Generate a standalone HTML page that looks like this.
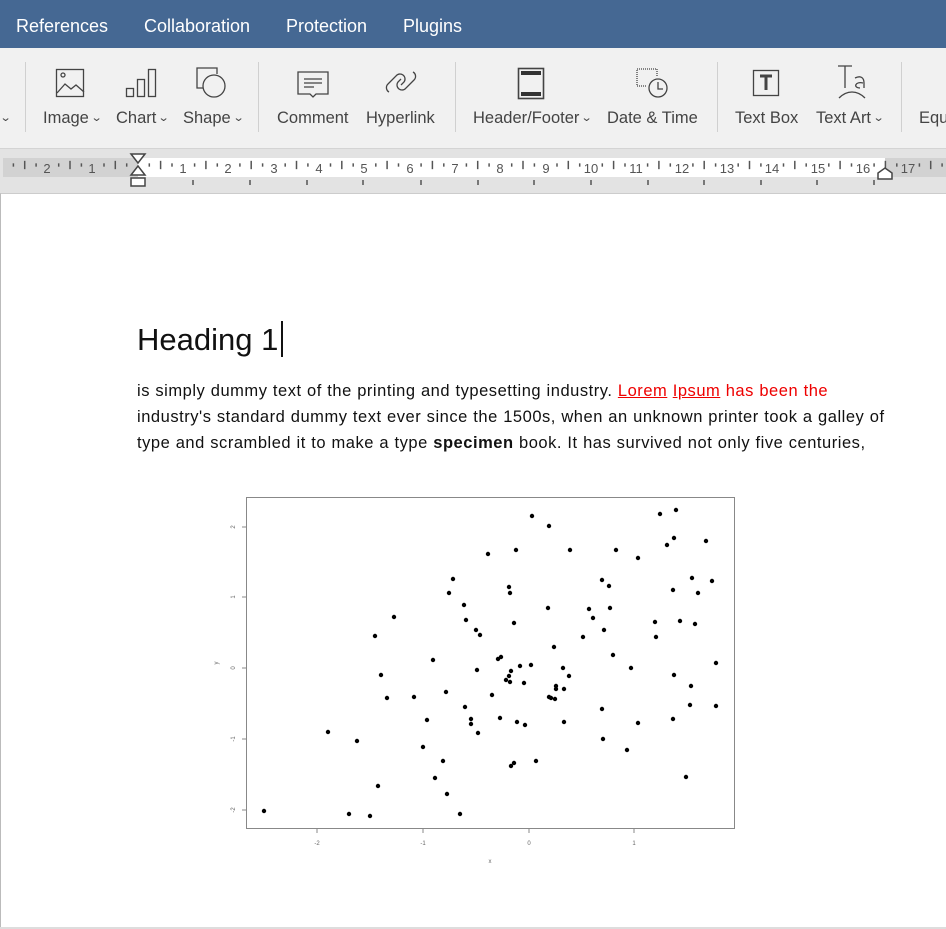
<!DOCTYPE html>
<html><head><meta charset="utf-8"><style>
*{margin:0;padding:0;box-sizing:border-box}
body{width:946px;height:929px;overflow:hidden;background:#fff;font-family:"Liberation Sans",sans-serif;position:relative}
.abs{position:absolute}
#menu{left:0;top:0;width:946px;height:48px;background:#456893}
#menu span{position:absolute;top:16px;color:#fff;font-size:18px}
#tb{left:0;top:48px;width:946px;height:100px;background:#f1f1f1}
.lbl{position:absolute;top:109px;font-size:16.5px;color:#444;white-space:nowrap}
.sep{position:absolute;top:62px;width:1px;height:70px;background:#d0d0d0}
.car{font-size:11px;display:inline-block;transform:scaleX(1.3);margin-left:3px;vertical-align:2px}
#rul{left:0;top:148px;width:946px;height:45px;background:#e3e3e3;border-top:1px solid #d4d4d4}
.line{position:absolute;left:137px;font-size:16.5px;color:#111;white-space:nowrap;letter-spacing:0.53px;word-spacing:0.3px}
</style></head><body>
<div id="menu" class="abs">
<span style="left:16px">References</span><span style="left:144px">Collaboration</span><span style="left:286px">Protection</span><span style="left:403px">Plugins</span>
</div>
<div id="tb" class="abs"></div>
<div class="sep" style="left:25px"></div><div class="sep" style="left:258px"></div><div class="sep" style="left:455px"></div><div class="sep" style="left:717px"></div><div class="sep" style="left:901px"></div>
<div class="lbl" style="left:-2px"><span class="car">⌄</span></div>
<div class="lbl" style="left:43px">Image<span class="car">⌄</span></div>
<div class="lbl" style="left:116px">Chart<span class="car">⌄</span></div>
<div class="lbl" style="left:183px">Shape<span class="car">⌄</span></div>
<div class="lbl" style="left:277px">Comment</div>
<div class="lbl" style="left:366px">Hyperlink</div>
<div class="lbl" style="left:473px">Header/Footer<span class="car">⌄</span></div>
<div class="lbl" style="left:607px">Date &amp; Time</div>
<div class="lbl" style="left:735px">Text Box</div>
<div class="lbl" style="left:816px">Text Art<span class="car">⌄</span></div>
<div class="lbl" style="left:919px">Equ</div>
<svg class="abs" style="left:0;top:48px" width="946" height="60" fill="none" stroke="#444" stroke-width="1.3">
<rect x="56.5" y="21.5" width="27" height="27"/><circle cx="63" cy="27" r="2"/><path d="M57 45l8-9 6 5 5-4 8 7"/>
<rect x="126.5" y="40.5" width="7" height="8"/><rect x="137.5" y="31.5" width="7" height="17"/><rect x="148.5" y="21.5" width="7" height="27"/>
<path d="M203 40h-6V20h20v6"/><circle cx="214" cy="38" r="11"/>
<path d="M298 24h30v22h-12l-3 3-3-3h-12z M304 31h18 M304 35h18 M304 39h10"/>
<path d="M389 44a5 5 0 0 1-1-8l8-8a5 5 0 0 1 8 6l-3 3 M413 24a5 5 0 0 1 1 8l-8 8a5 5 0 0 1-8-6l3-3"/>
<rect x="518.5" y="20.5" width="25" height="30" stroke-width="1.6"/><rect x="521" y="23" width="20" height="4" fill="#333" stroke="none"/><rect x="521" y="44" width="20" height="4" fill="#333" stroke="none"/>
<path d="M646 38h-9V21h20v7" stroke-dasharray="1 1"/><circle cx="658" cy="40" r="9"/><path d="M658 34v7h5"/>
<rect x="753.5" y="22.5" width="25" height="25"/><path d="M760 28h12M766 28v14" stroke-width="3"/>
<path d="M838 18h14M845 18v22M855 30c6-3 9 0 9 5v5M863 35c-8-2-10 5-3 5" /><path d="M839 50c8-8 18-8 26 0"/>
</svg>
<div id="rul" class="abs"></div>
<div class="abs" style="left:3px;top:158px;width:135px;height:19px;background:#d2d2d2"></div>
<div class="abs" style="left:138px;top:158px;width:747px;height:19px;background:#fff"></div>
<div class="abs" style="left:885px;top:158px;width:61px;height:19px;background:#d2d2d2"></div>
<svg class="abs" style="left:0;top:150px" width="946" height="42">
<g id="ticks" stroke="#555" stroke-width="1.5"></g>
<g font-family="Liberation Sans" font-size="13" fill="#555" text-anchor="middle">
<text x="47" y="23">2</text><text x="92" y="23">1</text>
<text x="183" y="23">1</text><text x="228" y="23">2</text><text x="274" y="23">3</text><text x="319" y="23">4</text><text x="364" y="23">5</text><text x="410" y="23">6</text><text x="455" y="23">7</text><text x="500" y="23">8</text><text x="546" y="23">9</text><text x="591" y="23">10</text><text x="636" y="23">11</text><text x="682" y="23">12</text><text x="727" y="23">13</text><text x="772" y="23">14</text><text x="818" y="23">15</text><text x="863" y="23">16</text><text x="908" y="23">17</text>
</g>
<path d="M131 4h14l-7 9z M131 25h14l-7-9z" fill="#fff" stroke="#444" stroke-width="1.5"/>
<rect x="131" y="28" width="14" height="8" fill="#fff" stroke="#444" stroke-width="1.5"/>
<path d="M878 29v-6l7-5 7 5v6z" fill="#fff" stroke="#444" stroke-width="1.5"/>
<g stroke="#555" stroke-width="1.5"><path d="M193 30v5M250 30v5M307 30v5M363 30v5M421 30v5M478 30v5M534 30v5M591 30v5M648 30v5M704 30v5M761 30v5M817 30v5M874 30v5"/></g>
</svg>
<script>
var g=document.getElementById('ticks'),s='';
for(var i=-3;i<18;i++){var b=138+45.3*i;
[[11.3,2],[22.6,5],[34,2]].forEach(function(t){var x=b+t[0];if(x>0&&x<946)s+='<line x1="'+x+'" x2="'+x+'" y1="'+(15-t[1]/1.2)+'" y2="'+(15+t[1]/1.2)+'"/>';});}
g.innerHTML=s;
</script>
<div class="abs" style="left:0;top:193px;width:946px;height:736px;background:#fff;border-left:1px solid #bbb;border-top:1px solid #ccc"></div>
<div class="abs" style="left:0;top:927px;width:946px;height:2px;background:#ddd"></div>
<div class="abs" style="left:137px;top:322px;font-size:31px;color:#111">Heading 1</div>
<div class="abs" style="left:281px;top:321px;width:2px;height:36px;background:#111"></div>
<div class="line" style="top:382px">is simply dummy text of the printing and typesetting industry. <span style="color:#e00"><u>Lorem</u> <u>Ipsum</u> has been the</span></div>
<div class="line" style="top:408px">industry's standard dummy text ever since the 1500s, when an unknown printer took a galley of</div>
<div class="line" style="top:434px">type and scrambled it to make a type <b>specimen</b> book. It has survived not only five centuries,</div>
<svg class="abs" style="left:0;top:0" width="946" height="929">
<rect x="246.5" y="497.5" width="488" height="331" fill="none" stroke="#888"/>
<g stroke="#888"><path d="M317 829v4M423 829v4M529 829v4M634 829v4M242 527h4M242 597h4M242 668h4M242 739h4M242 810h4"/></g>
<g font-family="Liberation Sans" font-size="6" fill="#666" text-anchor="middle">
<text x="317" y="845">-2</text><text x="423" y="845">-1</text><text x="529" y="845">0</text><text x="634" y="845">1</text><text x="490" y="863">x</text>
<text transform="translate(235 527) rotate(-90)">2</text><text transform="translate(235 597) rotate(-90)">1</text><text transform="translate(235 668) rotate(-90)">0</text><text transform="translate(235 739) rotate(-90)">-1</text><text transform="translate(235 810) rotate(-90)">-2</text><text transform="translate(218 663) rotate(-90)">y</text>
</g>
<g id="dots" fill="#000"></g>
</svg>
<script>
var p=[532,516,549,526,660,514,676,510,488,554,516,550,570,550,616,550,638,558,674,538,667,545,706,541,453,579,449,593,509,587,510,593,602,580,609,586,692,578,673,590,712,581,698,593,394,617,464,605,466,620,548,608,589,609,610,608,514,623,593,618,476,630,480,635,375,636,583,637,604,630,655,622,680,621,695,624,656,637,554,647,433,660,498,659,501,657,520,666,613,655,381,675,477,670,511,671,509,676,531,665,563,668,569,676,631,668,674,675,716,663,414,697,387,698,446,692,492,695,506,680,510,682,524,683,556,686,556,689,564,689,549,697,551,698,555,699,691,686,690,705,716,706,465,707,427,720,500,718,471,719,471,724,478,733,328,732,357,741,517,722,525,725,564,722,602,709,638,723,673,719,423,747,603,739,627,750,443,761,511,766,514,763,536,761,435,778,378,786,447,794,686,777,264,811,349,814,370,816,460,814],h='';
for(var i=0;i<p.length;i+=2)h+='<circle cx="'+p[i]+'" cy="'+p[i+1]+'" r="2.2"/>';
document.getElementById('dots').innerHTML=h;
</script>
</body></html>
